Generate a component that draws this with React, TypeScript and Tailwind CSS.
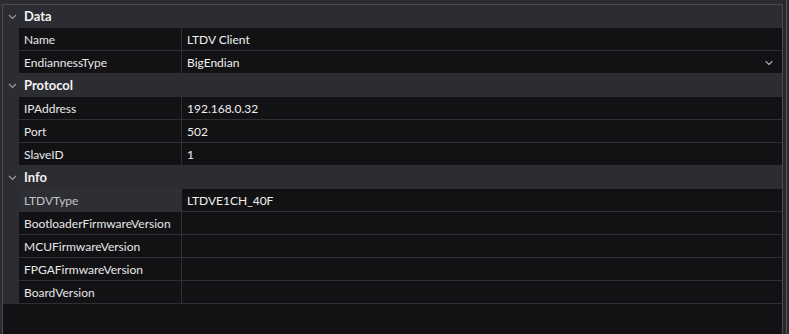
import { ChevronDown } from 'lucide-react';

type Prop = { name: string; value: string; dropdown?: boolean; selected?: boolean };
type Category = { title: string; props: Prop[] };

const categories: Category[] = [
  {
    title: 'Data',
    props: [
      { name: 'Name', value: 'LTDV Client' },
      { name: 'EndiannessType', value: 'BigEndian', dropdown: true },
    ],
  },
  {
    title: 'Protocol',
    props: [
      { name: 'IPAddress', value: '192.168.0.32' },
      { name: 'Port', value: '502' },
      { name: 'SlaveID', value: '1' },
    ],
  },
  {
    title: 'Info',
    props: [
      { name: 'LTDVType', value: 'LTDVE1CH_40F', selected: true },
      { name: 'BootloaderFirmwareVersion', value: '' },
      { name: 'MCUFirmwareVersion', value: '' },
      { name: 'FPGAFirmwareVersion', value: '' },
      { name: 'BoardVersion', value: '' },
    ],
  },
];

function Chevron() {
  return (
    <svg width="9" height="6" viewBox="0 0 9 6" className="text-[#9a9ba0]">
      <path d="M1 1 L4.5 4.5 L8 1" fill="none" stroke="currentColor" strokeWidth="1.2" />
    </svg>
  );
}

export default function App() {
  return (
    <div
      className="w-[789px] h-[334px] bg-[#2c2d32] flex overflow-hidden text-[12px]"
      style={{ fontFamily: 'Lato, "Noto Sans", sans-serif' }}
    >
      <div className="ml-[2px] mt-[4px] w-[781px] h-[330px] border-l border-t border-r border-[#4a4b51] bg-[#121215] flex flex-col">
        {categories.map((cat) => (
          <div key={cat.title} className="flex flex-col">
            <div className="h-[23px] flex items-center bg-[#2c2d32] pt-[1px]">
              <div className="w-[16px] flex justify-center pl-[2px]">
                <Chevron />
              </div>
              <span className="ml-[5px] font-bold text-[13px] text-[#f2f2f2]">{cat.title}</span>
            </div>
            {cat.props.map((p) => (
              <div key={p.name} className="h-[23px] flex">
                <div className="w-[16px] bg-[#2c2d32]" />
                <div
                  className={`w-[163px] flex items-center pl-[5px] pt-[2px] border-b border-r border-[#2f3034] ${
                    p.selected ? 'bg-[#2e2f34] text-[#c4c5c8]' : 'text-[#e8e8e8]'
                  }`}
                >
                  {p.name}
                </div>
                <div className="flex-1 flex items-center justify-between pl-[5px] pr-[7px] pt-[2px] border-b border-[#2f3034] text-[#f0f0f0]">
                  <span>{p.value}</span>
                  {p.dropdown && <ChevronDown size={12} strokeWidth={2.5} className="text-[#a0a1a6]" />}
                </div>
              </div>
            ))}
          </div>
        ))}
      </div>
      <div className="w-[3px] bg-[#26272b]" />
      <div className="w-[1px] bg-[#55565c]" />
      <div className="flex-1 bg-[#2c2d32]" />
    </div>
  );
}
